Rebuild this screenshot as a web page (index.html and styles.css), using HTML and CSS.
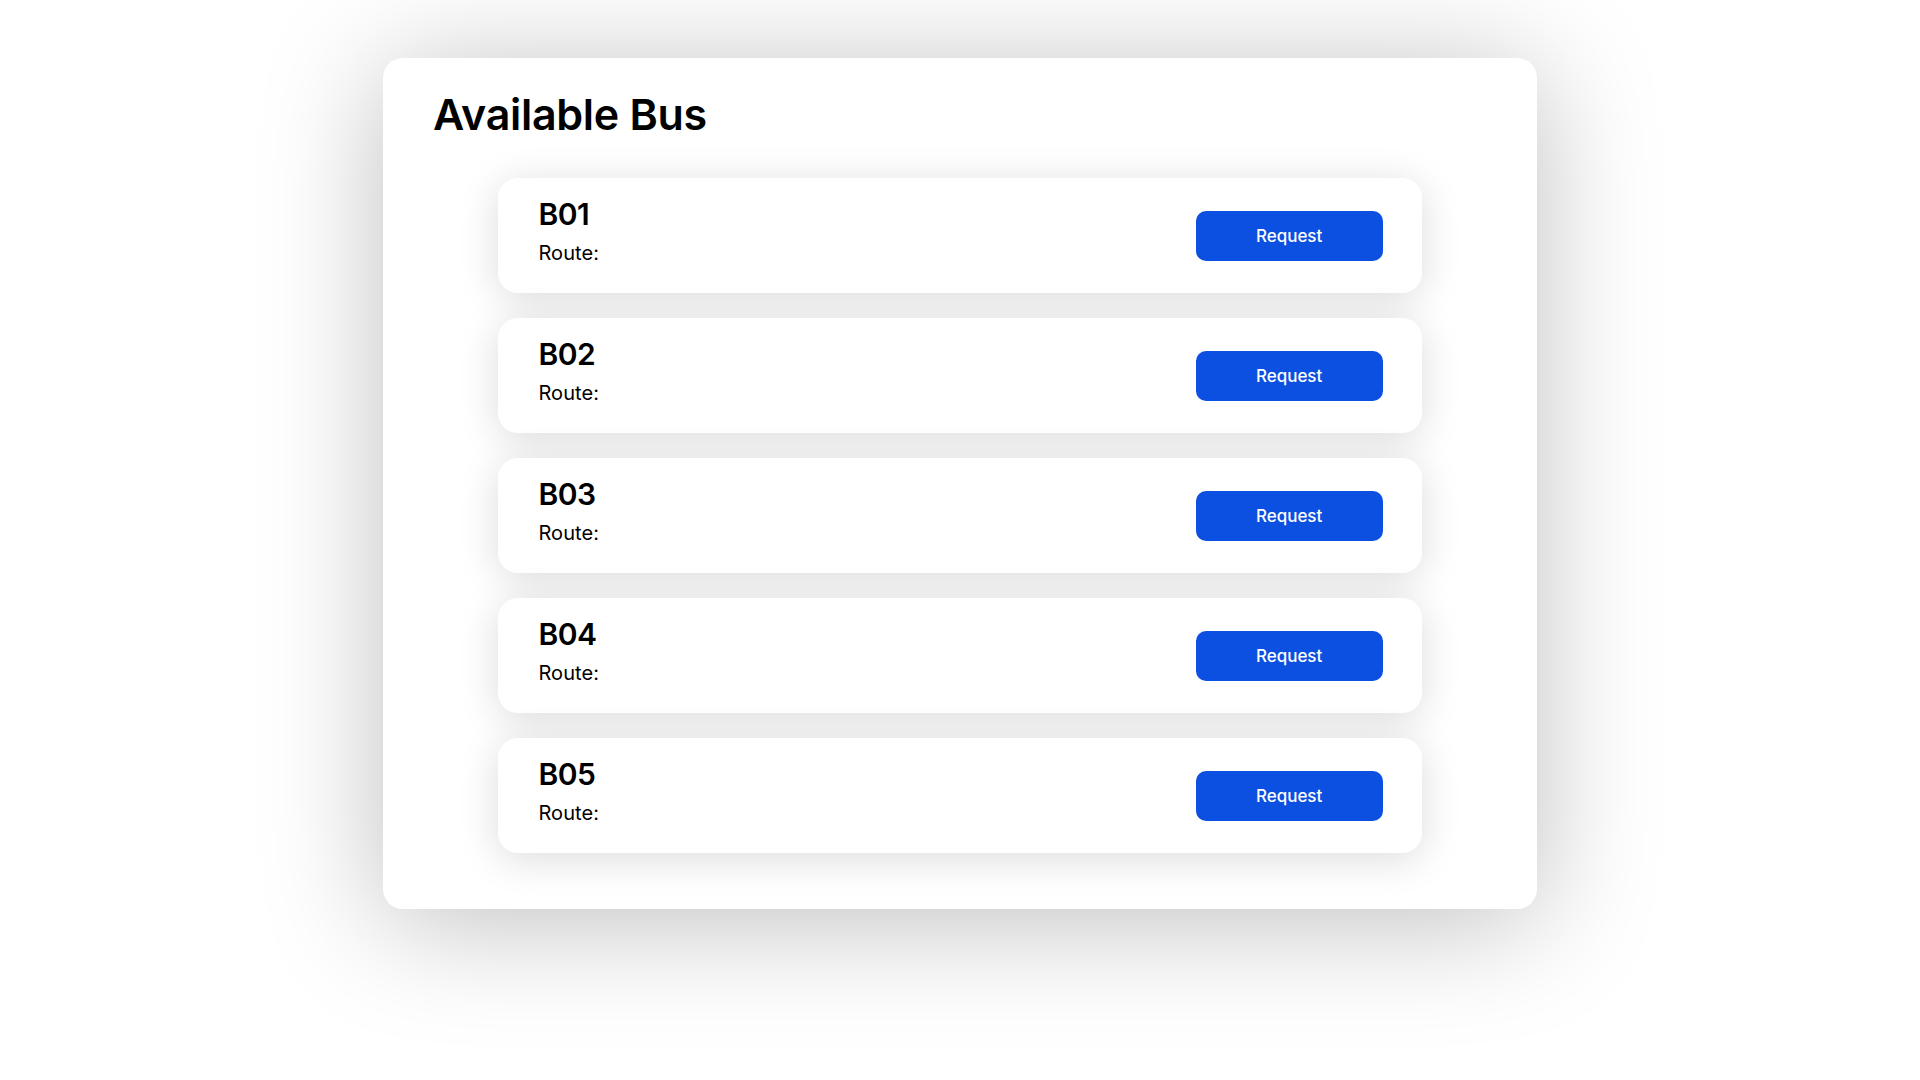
FILE: index.html
```html
<!DOCTYPE html>
<html lang="en">
<head>
<meta charset="utf-8">
<title>Available Bus</title>
<link rel="stylesheet" href="styles.css">
</head>
<body>
<main class="panel">
  <h1 class="panel-title">Available Bus</h1>
  <div class="bus-list">
    <div class="bus-card">
      <div class="bus-info">
        <h2 class="bus-id">B01</h2>
        <p class="bus-route">Route:</p>
      </div>
      <button class="request-btn">Request</button>
    </div>
    <div class="bus-card">
      <div class="bus-info">
        <h2 class="bus-id">B02</h2>
        <p class="bus-route">Route:</p>
      </div>
      <button class="request-btn">Request</button>
    </div>
    <div class="bus-card">
      <div class="bus-info">
        <h2 class="bus-id">B03</h2>
        <p class="bus-route">Route:</p>
      </div>
      <button class="request-btn">Request</button>
    </div>
    <div class="bus-card">
      <div class="bus-info">
        <h2 class="bus-id">B04</h2>
        <p class="bus-route">Route:</p>
      </div>
      <button class="request-btn">Request</button>
    </div>
    <div class="bus-card">
      <div class="bus-info">
        <h2 class="bus-id">B05</h2>
        <p class="bus-route">Route:</p>
      </div>
      <button class="request-btn">Request</button>
    </div>
  </div>
</main>
</body>
</html>
```

FILE: styles.css
```css
* {
  box-sizing: border-box;
}

html, body {
  margin: 0;
  padding: 0;
  background: #ffffff;
}

body {
  font-family: Inter, "Open Sans", "DejaVu Sans", sans-serif;
  color: #000000;
  padding-top: 58px;
  min-height: 1080px;
}

.panel {
  width: 1154px;
  height: 851px;
  margin: 0 auto;
  background: #ffffff;
  border-radius: 20px;
  padding: 31px 0 56px;
  box-shadow: 0 12px 120px rgba(0, 0, 0, 0.26);
}

.panel-title {
  margin: 0 0 39px;
  padding-left: 50px;
  font-size: 43px;
  line-height: 50px;
  font-weight: 600;
  letter-spacing: -0.3px;
}

.bus-list {
  width: 80%;
  margin: 0 auto;
  display: flex;
  flex-direction: column;
  gap: 25px;
}

.bus-card {
  height: 115px;
  background: #ffffff;
  border-radius: 20px;
  padding: 18px 39px 0 40px;
  display: flex;
  justify-content: space-between;
  align-items: flex-start;
  box-shadow: 0 6px 40px rgba(0, 0, 0, 0.14);
}

.bus-info {
  display: flex;
  flex-direction: column;
}

.bus-id {
  margin: 0;
  font-size: 30px;
  line-height: 36px;
  font-weight: 600;
  letter-spacing: -0.5px;
}

.bus-route {
  margin: 7px 0 0;
  font-size: 20px;
  line-height: 28px;
  font-weight: 400;
  letter-spacing: 0.1px;
}

.request-btn {
  margin-top: 15px;
  width: 187px;
  height: 50px;
  border: none;
  border-radius: 10px;
  background: #0b50e0;
  color: #ffffff;
  font-family: Inter, "Open Sans", sans-serif;
  font-size: 17px;
  font-weight: 500;
  cursor: pointer;
}
```
